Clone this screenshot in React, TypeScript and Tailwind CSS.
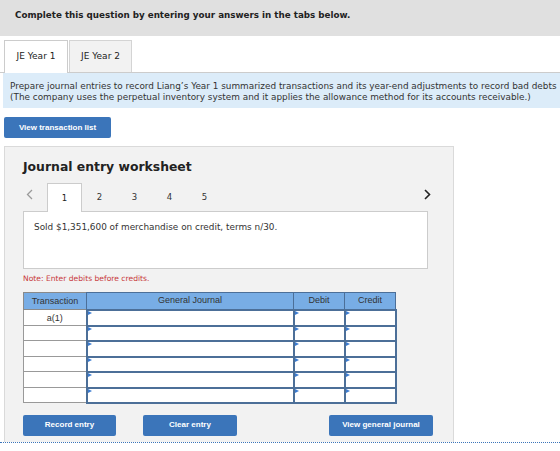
const rows = ["a(1)", "", "", "", "", ""]

function Marker() {
  // small pointer shown in the corner of each entry cell
  return (
    <svg className="absolute left-0 top-0" width="4" height="4" viewBox="0 0 4 4">
      <path d="M0 0 L4 2 L0 4 Z" fill="#3b7bd0" />
    </svg>
  )
}

function InputCell({ h }: { h: string }) {
  return (
    <td className={`relative border-2 border-[#4c6f98] bg-white p-0 ${h}`}>
      <Marker />
    </td>
  )
}

export default function App() {
  return (
    <div className="w-[560px] h-[451px] overflow-hidden bg-white font-['DejaVu_Sans',Verdana,sans-serif] text-[#222]">
      {/* instructions bar */}
      <div className="h-[36px] bg-[#e0e0e0] pl-[15px] pt-[9px] text-[8.75px] font-bold">
        Complete this question by entering your answers in the tabs below.
      </div>

      {/* year tabs */}
      <div className="mt-[4px] flex h-[33px] border-b border-[#cccccc] pl-[4px]">
        <div className="flex w-[64px] items-center justify-center border border-b-0 border-[#cccccc] bg-white text-[9px] -mb-px">
          JE Year 1
        </div>
        <div className="ml-px flex w-[63px] items-center justify-center border border-b-0 border-[#d4d4d4] bg-[#f2f2f2] text-[9px]">
          JE Year 2
        </div>
      </div>

      <div className="ml-[3px] h-[35px] bg-[#dcecf9] pl-[7px] pt-[8px] text-[8.9px] leading-[11px] text-[#333] whitespace-nowrap">
        <p>Prepare journal entries to record Liang’s Year 1 summarized transactions and its year-end adjustments to record bad debts</p>
        <p>(The company uses the perpetual inventory system and it applies the allowance method for its accounts receivable.)</p>
      </div>

      <button className="ml-[4px] mt-[9px] flex h-[21px] w-[107px] items-center justify-center rounded-[2px] bg-[#3b75ba] font-['Liberation_Sans',Arial,sans-serif] text-[8px] font-bold text-white">
        View transaction list
      </button>

      {/* worksheet panel */}
      <div className="ml-[4px] mt-[8px] h-[296px] w-[450px] border border-b-0 border-[#dadada] bg-[#f2f2f2] pl-[18px]">
        <h2 className="mt-[12px] text-[12.4px] font-bold leading-[16px] text-[#222]">Journal entry worksheet</h2>

        <div className="mt-[8px] flex h-[28px] items-end">
          <div className="flex h-full w-[24px] items-center pb-[6px] pl-[3px]">
            <svg width="7" height="11" viewBox="0 0 7 11">
              <path d="M6 1 L1.5 5.5 L6 10" fill="none" stroke="#9a9a9a" strokeWidth="1.3" />
            </svg>
          </div>
          <div className="-mb-px flex h-[29px] w-[35px] items-center justify-center border border-b-0 border-[#cccccc] bg-white text-[8.5px] z-10">
            1
          </div>
          {["2", "3", "4", "5"].map((n) => (
            <div key={n} className="flex h-full w-[35px] items-center justify-center text-[8.5px] text-[#333]">
              {n}
            </div>
          ))}
          <div className="ml-auto mr-[22px] flex h-full items-center pb-[6px]">
            <svg width="7" height="11" viewBox="0 0 7 11">
              <path d="M1 1 L5.5 5.5 L1 10" fill="none" stroke="#222" strokeWidth="1.6" />
            </svg>
          </div>
        </div>

        <div className="h-[58px] w-[405px] border border-[#cccccc] bg-white pl-[10px] pt-[9px] text-[8.9px] text-[#333]">
          Sold $1,351,600 of merchandise on credit, terms n/30.
        </div>

        <p className="mt-[4px] text-[7.6px] text-[#c8393b]">Note: Enter debits before credits.</p>

        <table className="mt-[8px] border-collapse font-['Liberation_Sans',Arial,sans-serif] text-[9px] text-[#333]">
          <thead>
            <tr className="h-[17px] bg-[#78ade5]">
              <th className="w-[63px] border border-[#8a8a8a] border-r-[#4c6f98] font-normal">Transaction</th>
              <th className="w-[207px] border border-[#4c6f98] font-normal">General Journal</th>
              <th className="w-[51px] border border-[#4c6f98] font-normal">Debit</th>
              <th className="w-[51px] border border-[#4c6f98] font-normal">Credit</th>
            </tr>
          </thead>
          <tbody>
            {rows.map((t, i) => {
              const h = i % 2 === 0 ? "h-[16px]" : "h-[15px]"
              return (
                <tr key={i} className={h}>
                  <td className="border border-[#999999] bg-white p-0 text-center leading-[12px]">{t}</td>
                  <InputCell h={h} />
                  <InputCell h={h} />
                  <InputCell h={h} />
                </tr>
              )
            })}
          </tbody>
        </table>

        <div className="mt-[11px] flex font-['Liberation_Sans',Arial,sans-serif] text-[8px] font-bold text-white">
          <button className="h-[21px] w-[93px] rounded-[2px] bg-[#3b75ba]">Record entry</button>
          <button className="ml-[27px] h-[21px] w-[94px] rounded-[2px] bg-[#3b75ba]">Clear entry</button>
          <button className="ml-[92px] h-[21px] w-[104px] rounded-[2px] bg-[#3b75ba]">View general journal</button>
        </div>
      </div>

      <div className="border-t border-dotted border-[#3b75ba]" />
    </div>
  )
}
